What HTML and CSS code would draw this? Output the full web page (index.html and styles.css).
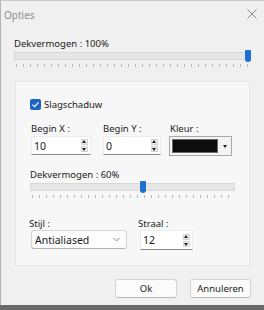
FILE: index.html
```html
<!DOCTYPE html>
<html>
<head>
    <title>Opties</title>
    <link rel="stylesheet" href="styles.css">
</head>
<body>
    <div class="dialog">
        <div class="titlebar">
            <span class="title">Opties</span>
            <svg class="close" width="10" height="10" viewBox="0 0 10 10">
                <path d="M0.5 0.5 L9.5 9.5 M9.5 0.5 L0.5 9.5" stroke="#8a8a8a" stroke-width="1" fill="none"/>
            </svg>
        </div>
        <div class="content">
            <div class="label">Dekvermogen : 100%</div>
            <div class="slider">
                <div class="track"></div>
                <div class="thumb" style="left: 100%;"></div>
            </div>
            <div class="ticks"></div>

            <div class="group">
                <label class="check-row">
                    <span class="checkbox">
                        <svg width="9" height="9" viewBox="0 0 9 9">
                            <path d="M1.5 4.6 L3.6 6.7 L7.6 2.3" stroke="#fff" stroke-width="1.2" fill="none"/>
                        </svg>
                    </span>
                    Slagschaduw
                </label>

                <div class="fields">
                    <div class="field">
                        <div class="label">Begin X :</div>
                        <div class="spin x">
                            <span class="value">10</span>
                            <span class="arrows"><span class="up"></span><span class="down"></span></span>
                        </div>
                    </div>
                    <div class="field">
                        <div class="label">Begin Y :</div>
                        <div class="spin y">
                            <span class="value">0</span>
                            <span class="arrows"><span class="up"></span><span class="down"></span></span>
                        </div>
                    </div>
                    <div class="field">
                        <div class="label">Kleur :</div>
                        <div class="color-box">
                            <span class="swatch"></span>
                            <span class="caret"></span>
                        </div>
                    </div>
                </div>

                <div class="label">Dekvermogen : 60%</div>
                <div class="slider inner">
                    <div class="track"></div>
                    <div class="thumb" style="left: 56%;"></div>
                </div>
                <div class="ticks inner"></div>

                <div class="fields bottom">
                    <div class="field">
                        <div class="label">Stijl :</div>
                        <div class="select">
                            <span class="value">Antialiased</span>
                            <svg width="7" height="5" viewBox="0 0 7 5">
                                <path d="M0.5 1 L3.5 4 L6.5 1" stroke="#8a8a8a" stroke-width="1" fill="none"/>
                            </svg>
                        </div>
                    </div>
                    <div class="field">
                        <div class="label">Straal :</div>
                        <div class="spin small">
                            <span class="value">12</span>
                            <span class="arrows"><span class="up"></span><span class="down"></span></span>
                        </div>
                    </div>
                </div>
            </div>

            <div class="buttons">
                <button class="btn ok">Ok</button>
                <button class="btn">Annuleren</button>
            </div>
        </div>
    </div>
</body>
</html>
```

FILE: styles.css
```css
body {
    margin: 0;
    padding: 0;
    font-family: "Noto Sans", "Open Sans", sans-serif;
    font-size: 9.5px;
    color: #1a1a1a;
    background-color: #6a6a6a;
}
.dialog {
    width: 264px;
    height: 305px;
    background-color: #f0f0f0;
    border-left: 1px solid #b4b4b4;
    border-top: 1px solid #c8c8c8;
    display: flex;
    flex-direction: column;
    box-sizing: border-box;
}
.titlebar {
    height: 27px;
    display: flex;
    align-items: center;
    justify-content: space-between;
    padding: 0 7px 0 3px;
}
.title {
    color: #8f8f8f;
    font-size: 10px;
}
.close {
    margin-top: -1px;
}
/* main area */
.content {
    padding: 10px 14px 0 13px;
}
.label {
    height: 12px;
    line-height: 12px;
    white-space: nowrap;
}
.slider {
    position: relative;
    height: 12px;
    display: flex;
    align-items: center;
}
.track {
    flex: 1;
    height: 8px;
    background-color: #e6e6e6;
    border: 1px solid #d8d8d8;
    box-sizing: border-box;
}
.thumb {
    position: absolute;
    top: 0;
    width: 6px;
    height: 12px;
    margin-left: -5px;
    background-color: #1f6fd0;
    border-radius: 1px 1px 3px 3px;
}
.ticks {
    height: 3px;
    margin: 2px 1px 0 2px;
    background-image: repeating-linear-gradient(to right, #b8b8b8 0, #b8b8b8 1px, transparent 1px, transparent 7px);
}
.group {
    margin-top: 14px;
    margin-left: 1px;
    padding: 16px 14px 15px 14px;
    background-color: #f7f7f7;
    border: 1px solid #e6e6e6;
}
.check-row {
    display: flex;
    align-items: center;
    gap: 3px;
    height: 12px;
}
.checkbox {
    width: 11px;
    height: 11px;
    background-color: #1c64c4;
    border-radius: 2px;
    display: flex;
    align-items: center;
    justify-content: center;
}
.fields {
    display: grid;
    grid-template-columns: 72px 67px 63px;
    margin-top: 13px;
    margin-bottom: 13px;
    padding-left: 1px;
}
.fields .label {
    margin-bottom: 1px;
}
.spin {
    height: 19px;
    background-color: #fff;
    border: 1px solid #ececec;
    border-bottom: 1px solid #8a8a8a;
    display: flex;
    align-items: center;
    justify-content: space-between;
    padding-left: 2px;
    box-sizing: border-box;
    font-size: 10.5px;
}
.spin.x {
    width: 60px;
}
.spin.y {
    width: 58px;
}
.spin.small {
    width: 53px;
    height: 20px;
}
.arrows {
    display: flex;
    flex-direction: column;
    gap: 1px;
    margin-right: 2px;
}
.arrows span {
    width: 7px;
    height: 6px;
    background-color: #ebebeb;
    border: 1px solid #d4d4d4;
    box-sizing: border-box;
    position: relative;
}
.up::after,
.down::after {
    content: "";
    position: absolute;
    left: 0;
    border-left: 2.5px solid transparent;
    border-right: 2.5px solid transparent;
}
.up::after {
    top: 0;
    border-bottom: 3px solid #222;
}
.down::after {
    top: 1px;
    border-top: 3px solid #222;
}
.color-box {
    width: 63px;
    height: 20px;
    margin-left: -1px;
    border: 1px solid #a8a8a8;
    background-color: #f4f4f4;
    display: flex;
    align-items: center;
    padding: 2px;
    box-sizing: border-box;
    gap: 2px;
}
.swatch {
    flex: 1;
    height: 100%;
    background-color: #0d0d0d;
    border: 1px solid #6a6a6a;
    box-sizing: border-box;
}
.caret {
    width: 9px;
    display: flex;
    justify-content: center;
}
.caret::after {
    content: "";
    border-left: 2px solid transparent;
    border-right: 2px solid transparent;
    border-top: 3px solid #222;
}
.ticks.inner {
    margin-right: 2px;
}
.fields.bottom {
    grid-template-columns: 109px 53px;
    margin-top: 20px;
    margin-bottom: 0;
}
.fields.bottom .label {
    margin-left: -2px;
    margin-bottom: 0;
}
.select {
    width: 96px;
    height: 19px;
    background-color: #fdfdfd;
    border: 1px solid #d4d4d4;
    border-bottom-color: #b4b4b4;
    border-radius: 3px;
    display: flex;
    align-items: center;
    justify-content: space-between;
    padding: 0 6px 0 3px;
    box-sizing: border-box;
    font-size: 10.5px;
}
.buttons {
    display: flex;
    justify-content: flex-end;
    gap: 13px;
    margin-top: 13px;
    margin-right: -1px;
}
.btn {
    width: 61px;
    height: 19px;
    font-family: "Noto Sans", "Open Sans", sans-serif;
    font-size: 9.5px;
    color: #1a1a1a;
    background-color: #fbfbfb;
    border: 1px solid #d4d4d4;
    border-bottom-color: #b8b8b8;
    border-radius: 3px;
    padding: 0;
}
.btn.ok {
    width: 62px;
}
```
